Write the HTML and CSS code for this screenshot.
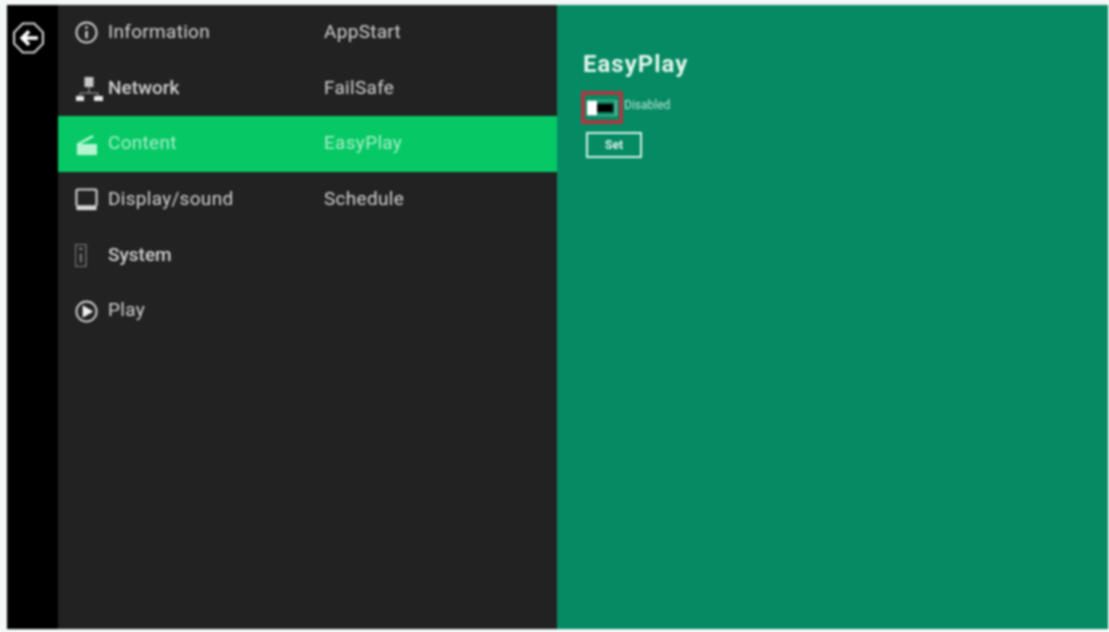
FILE: index.html
```html
<!DOCTYPE html>
<html lang="en">
<head>
<meta charset="utf-8">
<title>EasyPlay</title>
<link rel="stylesheet" href="styles.css">
</head>
<body>
<div class="frame">
  <aside class="rail">
    <svg class="back" viewBox="0 0 32 32">
      <polygon points="10.500,2 21.500,2 30,10.500 30,21.500 21.500,30 10.500,30 2,21.500 2,10.500" fill="none" stroke="#d8d8d8" stroke-width="2"/>
      <path d="M25 16H11M16.500 9.500L10 16l6.500 6.500" fill="none" stroke="#fff" stroke-width="3.600"/>
    </svg>
  </aside>
  <nav class="menu">
    <div class="row">
      <div class="main">
        <svg class="icon" viewBox="0 0 24 24"><circle cx="12" cy="12" r="10.500" fill="none" stroke="#d0d0d0" stroke-width="2"/><path d="M12 10.500v7.500M12 5.500v2.500" stroke="#d0d0d0" stroke-width="2.600"/></svg>
        <span class="label">Information</span>
      </div>
      <span class="label">AppStart</span>
    </div>
    <div class="row">
      <div class="main">
        <svg class="icon icon-wide" viewBox="0 0 28 26"><path d="M14 11v6M5 20v-3h18v3" fill="none" stroke="#aaa" stroke-width="1"/><rect x="9.500" y="1" width="9" height="10" fill="#c8c8c8"/><rect x="1" y="20" width="8" height="5" fill="#e8e8e8"/><rect x="19" y="20" width="9" height="5" fill="#e8e8e8"/></svg>
        <span class="label bold">Network</span>
      </div>
      <span class="label">FailSafe</span>
    </div>
    <div class="row active">
      <div class="main">
        <svg class="icon" viewBox="0 0 24 24"><path d="M2 11L18 2l1.500 2.500L6 11.500H23V23H2Z" fill="#b5f5d0"/></svg>
        <span class="label">Content</span>
      </div>
      <span class="label">EasyPlay</span>
    </div>
    <div class="row">
      <div class="main">
        <svg class="icon" viewBox="0 0 24 24"><rect x="1.500" y="1.500" width="21" height="17.500" rx="1.500" fill="none" stroke="#d0d0d0" stroke-width="2.200"/><rect x="1.500" y="20" width="21" height="3" fill="#e4e4e4"/></svg>
        <span class="label">Display/sound</span>
      </div>
      <span class="label">Schedule</span>
    </div>
    <div class="row">
      <div class="main">
        <svg class="icon" viewBox="0 0 24 24"><rect x="0.500" y="0.500" width="11" height="23" fill="none" stroke="#777" stroke-width="1.400"/><path d="M6 10v9M4 5h4" stroke="#999" stroke-width="1.600"/></svg>
        <span class="label bold">System</span>
      </div>
    </div>
    <div class="row">
      <div class="main">
        <svg class="icon" viewBox="0 0 24 24"><circle cx="12" cy="12" r="10.500" fill="none" stroke="#d0d0d0" stroke-width="2"/><path d="M8 5.500L19 12 8 18.500Z" fill="#f0f0f0"/></svg>
        <span class="label">Play</span>
      </div>
    </div>
  </nav>
  <main class="panel">
    <h1 class="title">EasyPlay</h1>
    <div class="toggle-line">
      <div class="toggle-mark">
        <div class="toggle"><span class="knob"></span><span class="track"></span></div>
      </div>
      <span class="state">Disabled</span>
    </div>
    <button class="set" type="button">Set</button>
  </main>
</div>
</body>
</html>
```

FILE: styles.css
```css
html, body {
  margin: 0;
  height: 100%;
}
body {
  background: #f4f8f6;
  padding: 5px 1px 3px 7px;
  box-sizing: border-box;
  font-family: Roboto, "Liberation Sans", sans-serif;
  overflow: hidden;
}
.frame {
  display: flex;
  height: 100%;
  filter: blur(0.8px);
}
.rail {
  width: 51px;
  flex: none;
  background: #000;
  padding: 16px 0 0 5px;
  box-sizing: border-box;
}
.back {
  display: block;
  width: 33px;
  height: 34px;
}
.menu {
  width: 499px;
  flex: none;
  background: #222222;
}
.row {
  height: 55.700px;
  display: flex;
  align-items: center;
  padding-left: 17px;
}
.row.active {
  background: #06c966;
}
.main {
  width: 249px;
  flex: none;
  display: flex;
  align-items: center;
}
.icon {
  width: 23px;
  height: 23px;
  margin-right: 10px;
  flex: none;
}
.icon-wide {
  width: 28px;
  height: 26px;
  margin-right: 5px;
}
.label {
  font-size: 19px;
  letter-spacing: 0.300px;
  color: #d2d2d2;
  line-height: 22px;
  padding-bottom: 2px;
}
.bold {
  font-weight: 500;
  letter-spacing: 0;
}
.active .label {
  color: #a6efc6;
}
.panel {
  flex: 1;
  background: #068a63;
  padding: 45px 0 0 26px;
  color: #dff5ec;
}
.title {
  margin: 0;
  font-size: 24px;
  line-height: 28px;
  font-weight: 700;
  letter-spacing: 1px;
}
.toggle-line {
  display: flex;
  align-items: center;
  margin-top: 13px;
  margin-left: -2px;
}
.toggle-mark {
  box-sizing: border-box;
  width: 42px;
  height: 33px;
  border: 4px solid #a93a42;
  padding: 0 2px;
  display: flex;
  align-items: center;
}
.toggle {
  width: 30px;
  height: 16px;
  display: flex;
  border-right: 2px solid #6fb8a0;
  border-top: 1px solid #6fb8a0;
  border-bottom: 1px solid #6fb8a0;
  box-sizing: border-box;
}
.knob {
  width: 10px;
  background: #fff;
}
.track {
  flex: 1;
  background: #000;
  margin: 3px 2px 3px 0;
}
.state {
  font-size: 12px;
  color: #b5e4d3;
  margin-left: 1px;
  margin-bottom: 5px;
}
.set {
  display: block;
  box-sizing: border-box;
  width: 56px;
  height: 26px;
  margin: 8px 0 0 3px;
  padding: 0;
  background: transparent;
  border: 2px solid #d5f2e7;
  color: #dff5ec;
  font-family: Roboto, "Liberation Sans", sans-serif;
  font-size: 12px;
  font-weight: 700;
}
```
